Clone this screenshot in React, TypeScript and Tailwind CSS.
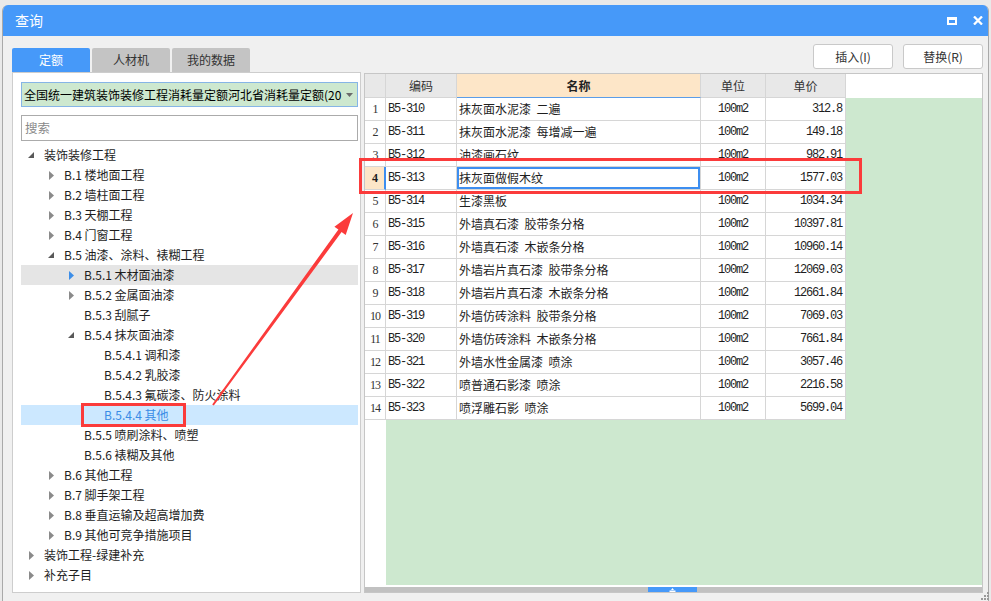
import React from 'react'

type TreeNode = {
  label: string
  level: number
  state: 'open' | 'closed' | 'leaf'
  hover?: boolean
  selected?: boolean
}

const tree: TreeNode[] = [
  { label: '装饰装修工程', level: 0, state: 'open' },
  { label: 'B.1 楼地面工程', level: 1, state: 'closed' },
  { label: 'B.2 墙柱面工程', level: 1, state: 'closed' },
  { label: 'B.3 天棚工程', level: 1, state: 'closed' },
  { label: 'B.4 门窗工程', level: 1, state: 'closed' },
  { label: 'B.5 油漆、涂料、裱糊工程', level: 1, state: 'open' },
  { label: 'B.5.1 木材面油漆', level: 2, state: 'closed', hover: true },
  { label: 'B.5.2 金属面油漆', level: 2, state: 'closed' },
  { label: 'B.5.3 刮腻子', level: 2, state: 'leaf' },
  { label: 'B.5.4 抹灰面油漆', level: 2, state: 'open' },
  { label: 'B.5.4.1 调和漆', level: 3, state: 'leaf' },
  { label: 'B.5.4.2 乳胶漆', level: 3, state: 'leaf' },
  { label: 'B.5.4.3 氟碳漆、防火涂料', level: 3, state: 'leaf' },
  { label: 'B.5.4.4 其他', level: 3, state: 'leaf', selected: true },
  { label: 'B.5.5 喷刷涂料、喷塑', level: 2, state: 'leaf' },
  { label: 'B.5.6 裱糊及其他', level: 2, state: 'leaf' },
  { label: 'B.6 其他工程', level: 1, state: 'closed' },
  { label: 'B.7 脚手架工程', level: 1, state: 'closed' },
  { label: 'B.8 垂直运输及超高增加费', level: 1, state: 'closed' },
  { label: 'B.9 其他可竞争措施项目', level: 1, state: 'closed' },
  { label: '装饰工程-绿建补充', level: 0, state: 'closed' },
  { label: '补充子目', level: 0, state: 'closed' },
]

const indent = ['pl-[2px]', 'pl-[22px]', 'pl-[42px]', 'pl-[62px]']

const rows = [
  ['B5-310', '抹灰面水泥漆  二遍', '312.8'],
  ['B5-311', '抹灰面水泥漆  每增减一遍', '149.18'],
  ['B5-312', '油漆画石纹', '982.91'],
  ['B5-313', '抹灰面做假木纹', '1577.03'],
  ['B5-314', '生漆黑板', '1034.34'],
  ['B5-315', '外墙真石漆  胶带条分格', '10397.81'],
  ['B5-316', '外墙真石漆  木嵌条分格', '10960.14'],
  ['B5-317', '外墙岩片真石漆  胶带条分格', '12069.03'],
  ['B5-318', '外墙岩片真石漆  木嵌条分格', '12661.84'],
  ['B5-319', '外墙仿砖涂料  胶带条分格', '7069.03'],
  ['B5-320', '外墙仿砖涂料  木嵌条分格', '7661.84'],
  ['B5-321', '外墙水性金属漆  喷涂', '3057.46'],
  ['B5-322', '喷普通石影漆  喷涂', '2216.58'],
  ['B5-323', '喷浮雕石影  喷涂', '5699.04'],
]

const Toggle = ({ node }: { node: TreeNode }) => {
  if (node.state === 'leaf') return <span className="w-[16px] shrink-0" />
  return (
    <span className="w-[16px] h-full shrink-0 flex items-center justify-center">
      {node.state === 'open' ? (
        <svg width="6" height="6" viewBox="0 0 6 6">
          <path d="M6 0 L6 6 L0 6 Z" fill="#595959" />
        </svg>
      ) : (
        <svg width="5" height="9" viewBox="0 0 5 9">
          <path d="M0 0 L5 4.5 L0 9 Z" fill={node.hover ? '#3d8ee8' : '#8a8a8a'} />
        </svg>
      )}
    </span>
  )
}

const mono = "font-['Liberation_Mono','Noto_Sans_CJK_SC',monospace] text-[12px] tracking-[-1.2px]"
const cell = 'h-full border-r border-b border-[#d6d6d6] shrink-0 flex items-center'

const App: React.FC = () => {
  return (
    <div className="relative w-[991px] h-[601px] bg-[#e9e9e9] pt-[5px] px-[2px] flex flex-col overflow-hidden font-['Noto_Sans_CJK_SC','Noto_Sans',sans-serif] text-[12px] text-[#1e1e1e]">
      <div className="flex-1 flex flex-col border-x border-[#a9a9a9] bg-[#f0f0f0] rounded-t-[6px] overflow-hidden">
        {/* Title bar */}
        <div className="h-[31px] bg-[#4699f9] flex items-center pl-[12px] pr-[5px] shrink-0">
          <span className="text-white text-[14px]">查询</span>
          <div className="ml-auto flex items-center gap-[16px]">
            <span className="w-[10px] h-[8px] border-2 border-t-[3px] border-white" />
            <svg width="10" height="9" viewBox="0 0 10 9">
              <path d="M1 0.5 L9 8.5 M9 0.5 L1 8.5" stroke="white" strokeWidth="2.3" />
            </svg>
          </div>
        </div>

        {/* Body */}
        <div className="flex-1 flex gap-[3px] pl-[9px] pr-[5px] pb-[8px] min-h-0">
          {/* Left column */}
          <div className="w-[349px] flex flex-col pt-[12px]">
            <div className="h-[24px] flex gap-[2px]">
              <div className="w-[78px] rounded-t-[2px] bg-[#4699f9] text-white flex items-center justify-center">定额</div>
              <div className="w-[78px] rounded-t-[2px] bg-[#c4c4c4] text-[#333] flex items-center justify-center">人材机</div>
              <div className="w-[78px] rounded-t-[2px] bg-[#c4c4c4] text-[#333] flex items-center justify-center">我的数据</div>
            </div>
            <div className="flex-1 bg-white border border-[#cdcdcd] pl-[8px] pr-[2px] pt-[9px] flex flex-col">
              <div className="h-[25px] bg-[#cde8cf] border border-[#86b5e6] flex items-center pl-[2px] pr-[4px]">
                <span className="flex-1 min-w-0 overflow-hidden whitespace-nowrap text-black">
                  全国统一建筑装饰装修工程消耗量定额河北省消耗量定额(20
                </span>
                <svg width="7" height="4" viewBox="0 0 7 4" className="ml-[4px] shrink-0">
                  <path d="M0 0 L7 0 L3.5 4 Z" fill="#6a6a6a" />
                </svg>
              </div>
              <div className="h-[26px] mt-[8px] border border-[#ababab] flex items-center pl-[3px] text-[#8a8a8a] text-[12.5px]">
                搜索
              </div>
              <div className="mt-[4px] flex flex-col">
                {tree.map((n, i) => (
                  <div
                    key={i}
                    className={`h-[20px] flex items-center ${indent[n.level]} ${
                      n.selected ? 'bg-[#cce8ff] text-[#3a8ce6]' : n.hover ? 'bg-[#e5e5e5]' : ''
                    }`}
                  >
                    <Toggle node={n} />
                    <span className="ml-[5px] whitespace-nowrap">{n.label}</span>
                  </div>
                ))}
              </div>
            </div>
          </div>

          {/* Right column */}
          <div className="flex-1 flex flex-col pt-[8px]">
            <div className="h-[25px] flex justify-end gap-[10px]">
              <button className="w-[80px] h-full bg-white border border-[#c9c9c9] rounded-[3px] text-[#333]">插入(I)</button>
              <button className="w-[80px] h-full bg-white border border-[#c9c9c9] rounded-[3px] text-[#333]">替换(R)</button>
            </div>
            <div className="flex-1 mt-[4px] border border-[#c6c6c6] bg-white flex flex-col">
              {/* header */}
              <div className="h-[24px] flex shrink-0">
                <div className={`${cell} w-[21px] bg-[#e8e8e8]`} />
                <div className={`${cell} w-[71px] bg-[#e8e8e8] justify-center text-[#333]`}>编码</div>
                <div className={`${cell} w-[244px] bg-[#fde6c8] justify-center font-bold text-[#222] border-b-[#5b9de8]`}>名称</div>
                <div className={`${cell} w-[65px] bg-[#e8e8e8] justify-center text-[#333]`}>单位</div>
                <div className={`${cell} w-[80px] bg-[#e8e8e8] justify-center text-[#333]`}>单价</div>
                <div className="flex-1 bg-white" />
              </div>
              {/* rows */}
              {rows.map((r, i) => {
                const active = i === 3
                return (
                  <div key={i} className="h-[23px] flex shrink-0">
                    <div
                      className={`${cell} w-[21px] justify-center text-[12px] tracking-[-1px] font-['Liberation_Serif',serif] ${
                        active ? 'bg-[#fde6c8] font-bold border-r-2 border-r-[#3d8ef0]' : 'bg-white text-[#333]'
                      }`}
                    >
                      {i + 1}
                    </div>
                    <div className={`${cell} w-[71px] pl-[2px] ${mono}`}>{r[0]}</div>
                    <div
                      className={`${cell} w-[244px] pl-[2px] whitespace-pre ${
                        active ? 'shadow-[inset_0_0_0_2px_#3d8ef0]' : ''
                      }`}
                    >
                      {r[1]}
                    </div>
                    <div className={`${cell} w-[65px] justify-center ${mono}`}>100m2</div>
                    <div className={`${cell} w-[80px] justify-end pr-[3px] ${mono}`}>{r[2]}</div>
                    <div className="flex-1 bg-[#cde8cf]" />
                  </div>
                )
              })}
              {/* empty area */}
              <div className="flex-1 flex">
                <div className="w-[21px] bg-white" />
                <div className="flex-1 bg-[#cde8cf]" />
              </div>
              <div className="h-[2px] bg-white shrink-0" />
              <div className="h-[5px] bg-[#c1c1c1] shrink-0 flex">
                <div className="ml-[283px] w-[49px] h-full bg-[#4699f9] flex flex-col items-center justify-center">
                  <svg width="7" height="4" viewBox="0 0 7 4">
                    <path d="M3.5 0 L5 2 L2 2 Z M0.5 2.5 L6.5 2.5 L6.5 4 L0.5 4 Z" fill="white" />
                  </svg>
                </div>
              </div>
            </div>
          </div>
        </div>
      </div>

      {/* resize grip */}
      <div className="absolute right-[2px] bottom-[1px] grid grid-cols-3 gap-[1px]">
        <span className="w-[2px] h-[2px]" />
        <span className="w-[2px] h-[2px]" />
        <span className="w-[2px] h-[2px] bg-[#9a9a9a]" />
        <span className="w-[2px] h-[2px]" />
        <span className="w-[2px] h-[2px] bg-[#9a9a9a]" />
        <span className="w-[2px] h-[2px] bg-[#9a9a9a]" />
        <span className="w-[2px] h-[2px] bg-[#9a9a9a]" />
        <span className="w-[2px] h-[2px] bg-[#9a9a9a]" />
        <span className="w-[2px] h-[2px] bg-[#9a9a9a]" />
      </div>

      {/* annotations */}
      <svg className="absolute left-0 top-0 pointer-events-none" width="991" height="601" viewBox="0 0 991 601">
        <rect x="82.5" y="404.5" width="102" height="21" fill="none" stroke="#fb3b3b" strokeWidth="3" />
        <rect x="360.5" y="159.5" width="500" height="33" fill="none" stroke="#fb3b3b" strokeWidth="3" />
        <polygon
          points="213.8,405.6 341.6,232.0 345.7,234.9 353,213 334.4,226.7 338.4,229.6 212.2,404.4"
          fill="#fb3b3b"
        />
      </svg>
    </div>
  )
}

export default App
